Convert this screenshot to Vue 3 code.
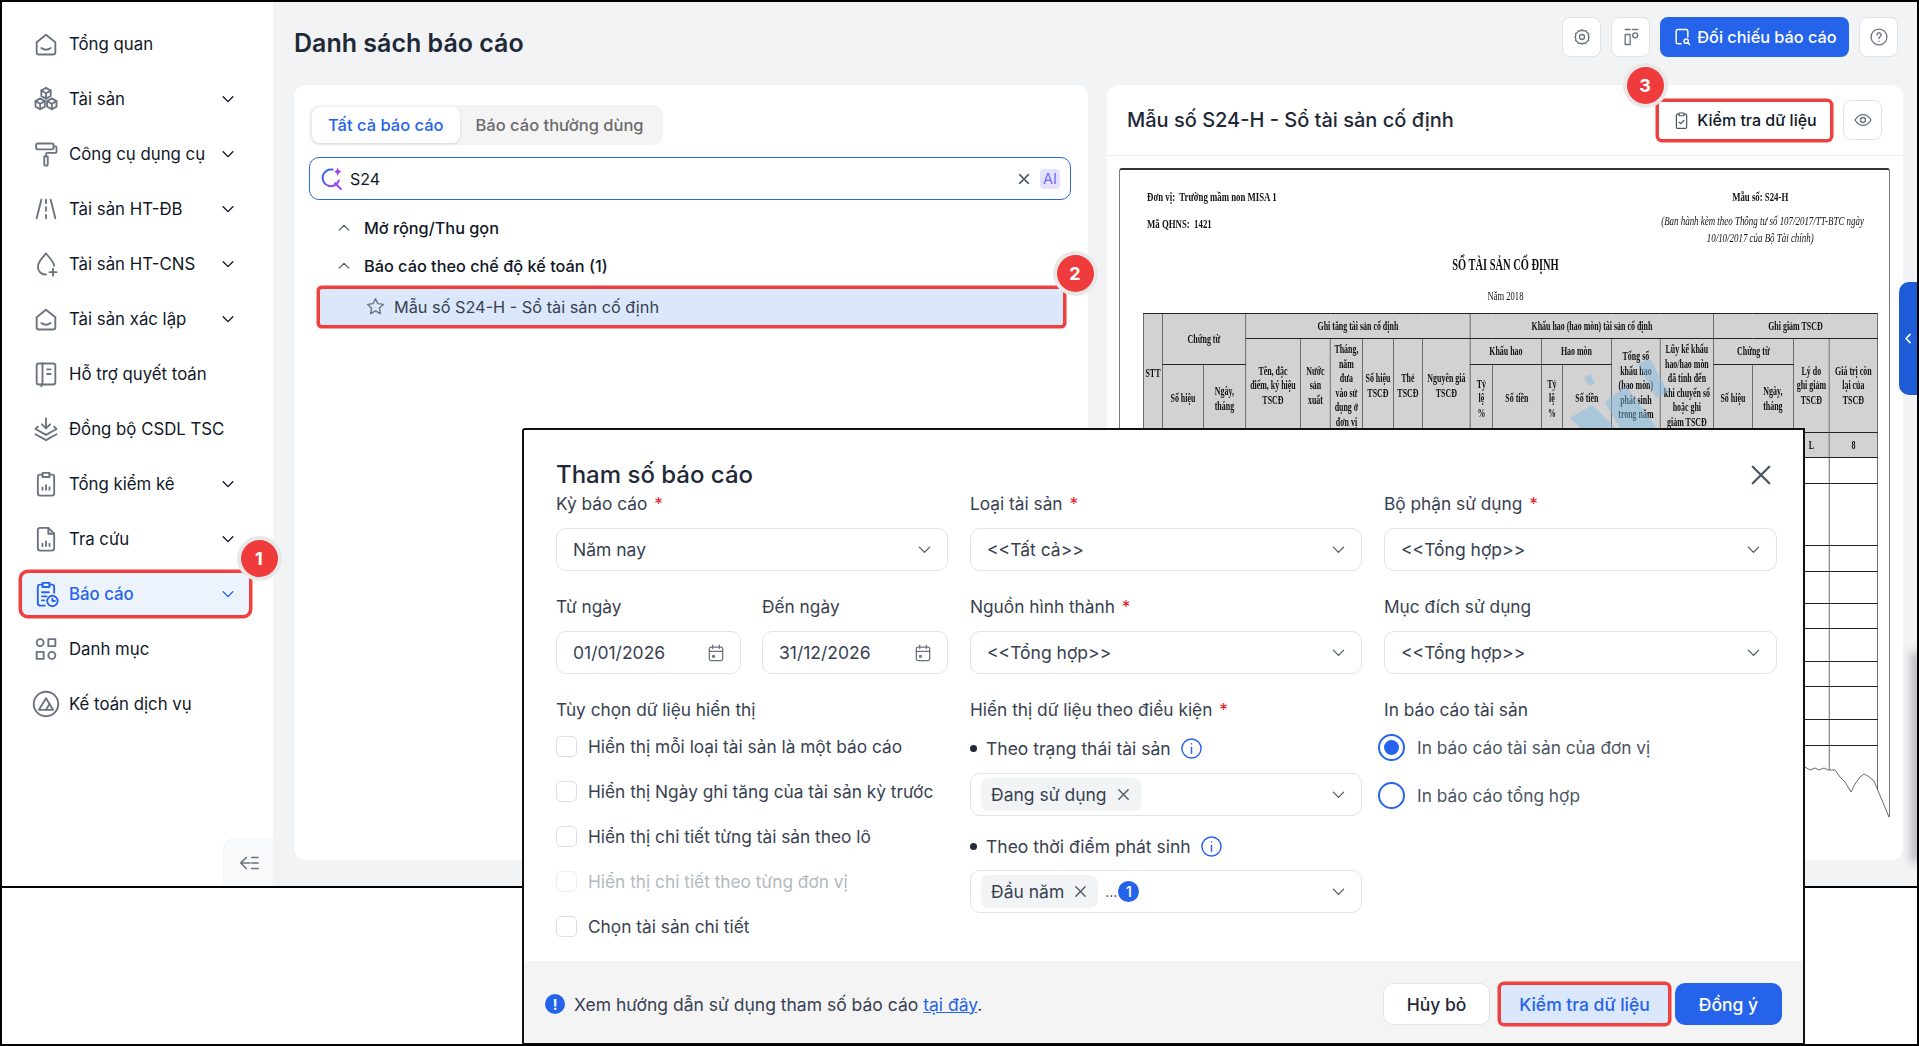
<template>
  <div class="page">
    <div class="app">
      <!-- Sidebar -->
      <aside class="sidebar">
        <div v-for="item in menu" :key="item.label" :class="['menu-item', { active: item.active }]">
          <svg class="menu-icon" viewBox="0 0 24 24">
            <path v-for="d in icons[item.icon]" :key="d" :d="d" />
          </svg>
          <span class="menu-label">{{ item.label }}</span>
          <svg v-if="item.sub" class="menu-chev" viewBox="0 0 16 16"><path d="M2.500 5.500 8 11l5.500-5.500" /></svg>
        </div>
        <div class="collapse-btn">
          <svg viewBox="0 0 24 24"><path d="M9 6 3 12l6 6M3 12h10M15 6h7M15 12h7M15 18h7" /></svg>
        </div>
      </aside>

      <main class="main">
        <header class="topbar">
          <h1>Danh sách báo cáo</h1>
          <div class="top-actions">
            <button class="icon-btn">
              <svg viewBox="0 0 24 24"><path d="M12 3.500l2 1.200 2.500-.3 1.300 2.200 2.200 1.300-.3 2.500L20.500 12l-.8 1.600.3 2.500-2.200 1.300-1.300 2.200-2.500-.3-2 1.200-2-1.200-2.500.3-1.300-2.200L4.300 16.100l.3-2.500L3.500 12l1.100-1.600-.3-2.500 2.200-1.300 1.300-2.200 2.500.3z" /><circle cx="12" cy="12" r="3" /></svg>
            </button>
            <button class="icon-btn">
              <svg viewBox="0 0 24 24"><path d="M5 3h6M5 21V9h6v12zM14 3h6" /><circle cx="17" cy="10" r="3" /></svg>
            </button>
            <button class="primary-btn">
              <svg viewBox="0 0 24 24"><path d="M11 20H7a2 2 0 0 1-2-2V5a2 2 0 0 1 2-2h10a2 2 0 0 1 2 2v7" /><circle cx="17" cy="17" r="2.500" /><path d="m19 19 2 2" /></svg>
              Đối chiếu báo cáo
            </button>
            <button class="icon-btn">
              <svg viewBox="0 0 24 24"><circle cx="12" cy="12" r="9.500" /><path d="M9.500 9.500a2.500 2.500 0 1 1 3.800 2.100c-.9.600-1.300 1.100-1.300 2.200M12 17v.2" /></svg>
            </button>
          </div>
        </header>

        <div class="cards">
          <!-- Danh sách -->
          <section class="card list-card">
            <div class="tabs">
              <div class="tab on">Tất cả báo cáo</div>
              <div class="tab">Báo cáo thường dùng</div>
            </div>
            <div class="search">
              <svg class="search-icon" viewBox="0 0 24 24">
                <defs>
                  <linearGradient id="aig" x1="0" y1="0" x2="1" y2="1"><stop offset="0" stop-color="#2f6bed" /><stop offset="1" stop-color="#b53ff0" /></linearGradient>
                </defs>
                <path d="M13 3.500a8 8 0 1 0 6 10.500M15.500 16.500 21 22" fill="none" stroke="url(#aig)" stroke-width="2" stroke-linecap="round" />
                <path d="M18 1c.5 3 1.500 4 4 4.500-2.500.5-3.500 1.500-4 4.500-.5-3-1.500-4-4-4.500 2.500-.5 3.500-1.500 4-4.500z" fill="#a23ff0" />
              </svg>
              <span class="search-text">S24</span>
              <svg class="search-x" viewBox="0 0 16 16"><path d="m3 3 10 10M13 3 3 13" /></svg>
              <span class="ai-chip">AI</span>
            </div>
            <div class="tree">
              <div class="tree-row">
                <svg viewBox="0 0 16 16"><path d="M2.500 10.500 8 5l5.500 5.500" /></svg>
                Mở rộng/Thu gọn
              </div>
              <div class="tree-row">
                <svg viewBox="0 0 16 16"><path d="M2.500 10.500 8 5l5.500 5.500" /></svg>
                Báo cáo theo chế độ kế toán (1)
              </div>
              <div class="report-row">
                <svg viewBox="0 0 24 24"><path d="m12 3 2.700 5.800 6.300.8-4.600 4.300 1.200 6.300L12 17l-5.600 3.200 1.200-6.300L3 9.600l6.300-.8z" /></svg>
                Mẫu số S24-H - Sổ tài sản cố định
              </div>
            </div>
          </section>

          <!-- Xem trước -->
          <section class="card preview-card">
            <div class="preview-head">
              <h2>Mẫu số S24-H - Sổ tài sản cố định</h2>
              <button class="check-btn">
                <svg viewBox="0 0 24 24"><path d="M9 4H7a1.500 1.500 0 0 0-1.500 1.500v15A1.500 1.500 0 0 0 7 22h10a1.500 1.500 0 0 0 1.500-1.500v-15A1.500 1.500 0 0 0 17 4h-2M9 2.500h6v3.500H9zM9 14l2 2 4-4" /></svg>
                Kiểm tra dữ liệu
              </button>
              <button class="icon-btn">
                <svg viewBox="0 0 24 24"><path d="M2.500 12C5 7.500 8 5.500 12 5.500s7 2 9.500 6.500C19 16.500 16 18.500 12 18.500S5 16.500 2.500 12z" /><circle cx="12" cy="12" r="3" /></svg>
              </button>
            </div>
            <div class="doc-wrap">
              <div class="doc">
                <div class="doc-head">
                  <div class="doc-unit">
                    <p>Đơn vị:&nbsp; Trường mầm non MISA 1</p>
                    <p>Mã QHNS:&nbsp; 1421</p>
                  </div>
                  <div class="doc-form">
                    <p class="form-no">Mẫu số: S24-H</p>
                    <p class="form-note">(Ban hành kèm theo Thông tư số 107/2017/TT-BTC ngày<br />10/10/2017 của Bộ Tài chính)</p>
                  </div>
                </div>
                <p class="doc-title">SỔ TÀI SẢN CỐ ĐỊNH</p>
                <p class="doc-year">Năm 2018</p>
                <table class="doc-table" :style="{ width: tableWidth + 'px' }">
                  <colgroup>
                    <col v-for="(w, i) in colWidths" :key="i" :style="{ width: w + 'px' }" />
                  </colgroup>
                  <tbody>
                    <tr class="h1">
                      <th rowspan="3">STT</th>
                      <th colspan="2" rowspan="2">Chứng từ</th>
                      <th colspan="6">Ghi tăng tài sản cố định</th>
                      <th colspan="6">Khấu hao (hao mòn) tài sản cố định</th>
                      <th colspan="4">Ghi giảm TSCĐ</th>
                    </tr>
                    <tr class="h2">
                      <th rowspan="2">Tên, đặc<br />điểm, ký hiệu<br />TSCĐ</th>
                      <th rowspan="2">Nước<br />sản<br />xuất</th>
                      <th rowspan="2">Tháng,<br />năm<br />đưa<br />vào sử<br />dụng ở<br />đơn vị</th>
                      <th rowspan="2">Số hiệu<br />TSCĐ</th>
                      <th rowspan="2">Thẻ<br />TSCĐ</th>
                      <th rowspan="2">Nguyên giá<br />TSCĐ</th>
                      <th colspan="2">Khấu hao</th>
                      <th colspan="2">Hao mòn</th>
                      <th rowspan="2">Tổng số<br />khấu hao<br />(hao mòn)<br />phát sinh<br />trong năm</th>
                      <th rowspan="2">Lũy kế khấu<br />hao/hao mòn<br />đã tính đến<br />khi chuyển sổ<br />hoặc ghi<br />giảm TSCĐ</th>
                      <th colspan="2">Chứng từ</th>
                      <th rowspan="2">Lý do<br />ghi giảm<br />TSCĐ</th>
                      <th rowspan="2">Giá trị còn<br />lại của<br />TSCĐ</th>
                    </tr>
                    <tr class="h3">
                      <th>Số hiệu</th><th>Ngày,<br />tháng</th>
                      <th>Tỷ<br />lệ<br />%</th><th>Số tiền</th>
                      <th>Tỷ<br />lệ<br />%</th><th>Số tiền</th>
                      <th>Số hiệu</th><th>Ngày,<br />tháng</th>
                    </tr>
                    <tr class="h4">
                      <th v-for="(t, i) in numberRow" :key="i">{{ t }}</th>
                    </tr>
                    <tr v-for="(h, r) in rowHeights" :key="r" :style="{ height: h + 'px' }">
                      <td v-for="c in 19" :key="c"></td>
                    </tr>
                  </tbody>
                </table>
              </div>
              <svg class="watermark" viewBox="1560 360 120 75">
                <path d="M1570 418 1592 405 1620 432H1585zM1605 402 1626 386 1660 432H1622zM1638 364 1650 358 1668 392 1656 398zM1584 378l6-4 5 9-6 3z" />
              </svg>
            </div>
            <!-- Mép giấy bị cắt của ảnh chụp tài liệu -->
            <svg class="torn" viewBox="1800 758 100 110">
              <path class="torn-fill" d="M1800 766 1805 767 1810 770 1815 768 1819 770 1824 768 1828 770 1835 770 1840 777 1845 782 1851 792 1855 784 1860 777 1864 774 1868 776 1874 781 1889 817H1900V868H1800z" />
              <path class="torn-line" d="M1805 767 1810 770 1815 768 1819 770 1824 768 1828 770 1835 770 1840 777 1845 782 1851 792 1855 784 1860 777 1864 774 1868 776 1874 781 1889 817" />
            </svg>
          </section>
        </div>
        <div class="side-tab">
          <svg viewBox="0 0 16 16"><path d="M10 3 5 8l5 5" /></svg>
        </div>
        <div class="edge-shade"></div>
      </main>
    </div>

    <!-- Hộp thoại tham số -->
    <div class="modal">
      <div class="modal-body">
        <h3 class="modal-title">Tham số báo cáo</h3>
        <svg class="modal-close" viewBox="0 0 24 24"><path d="M3 3l18 18M21 3 3 21" /></svg>
        <div class="form-grid">
          <div class="col">
            <label class="lbl">Kỳ báo cáo <i>*</i></label>
            <div class="select">Năm nay<svg viewBox="0 0 16 16"><path d="M2.500 5.500 8 11l5.500-5.500" /></svg></div>
            <div class="date-pair">
              <div class="date-item">
                <label class="lbl">Từ ngày</label>
                <div class="select">01/01/2026<svg class="cal" viewBox="0 0 24 24"><rect x="4" y="5" width="16" height="16" rx="2" /><path d="M4 10h16M8 2.500v4M16 2.500v4M8 15h2v2H8z" /></svg></div>
              </div>
              <div class="date-item">
                <label class="lbl">Đến ngày</label>
                <div class="select">31/12/2026<svg class="cal" viewBox="0 0 24 24"><rect x="4" y="5" width="16" height="16" rx="2" /><path d="M4 10h16M8 2.500v4M16 2.500v4M8 15h2v2H8z" /></svg></div>
              </div>
            </div>
            <label class="lbl spaced">Tùy chọn dữ liệu hiển thị</label>
            <div class="checks">
              <div v-for="c in checks" :key="c.text" :class="['check', { off: c.off }]">
                <span class="box"></span>{{ c.text }}
              </div>
            </div>
          </div>

          <div class="col">
            <label class="lbl">Loại tài sản <i>*</i></label>
            <div class="select">&lt;&lt;Tất cả&gt;&gt;<svg viewBox="0 0 16 16"><path d="M2.500 5.500 8 11l5.500-5.500" /></svg></div>
            <label class="lbl spaced">Nguồn hình thành <i>*</i></label>
            <div class="select">&lt;&lt;Tổng hợp&gt;&gt;<svg viewBox="0 0 16 16"><path d="M2.500 5.500 8 11l5.500-5.500" /></svg></div>
            <label class="lbl spaced">Hiển thị dữ liệu theo điều kiện <i>*</i></label>
            <div class="cond first"><span class="bullet"></span>Theo trạng thái tài sản
              <svg class="info" viewBox="0 0 24 24"><circle cx="12" cy="12" r="10" /><path d="M12 11v6M12 7v.2" /></svg>
            </div>
            <div class="select tags near">
              <span class="tag">Đang sử dụng<svg viewBox="0 0 16 16"><path d="m3 3 10 10M13 3 3 13" /></svg></span>
              <svg class="chev" viewBox="0 0 16 16"><path d="M2.500 5.500 8 11l5.500-5.500" /></svg>
            </div>
            <div class="cond"><span class="bullet"></span>Theo thời điểm phát sinh
              <svg class="info" viewBox="0 0 24 24"><circle cx="12" cy="12" r="10" /><path d="M12 11v6M12 7v.2" /></svg>
            </div>
            <div class="select tags">
              <span class="tag">Đầu năm<svg viewBox="0 0 16 16"><path d="m3 3 10 10M13 3 3 13" /></svg></span>
              <span class="more">...</span><span class="count">1</span>
              <svg class="chev" viewBox="0 0 16 16"><path d="M2.500 5.500 8 11l5.500-5.500" /></svg>
            </div>
          </div>

          <div class="col">
            <label class="lbl">Bộ phận sử dụng <i>*</i></label>
            <div class="select">&lt;&lt;Tổng hợp&gt;&gt;<svg viewBox="0 0 16 16"><path d="M2.500 5.500 8 11l5.500-5.500" /></svg></div>
            <label class="lbl spaced">Mục đích sử dụng</label>
            <div class="select">&lt;&lt;Tổng hợp&gt;&gt;<svg viewBox="0 0 16 16"><path d="M2.500 5.500 8 11l5.500-5.500" /></svg></div>
            <label class="lbl spaced">In báo cáo tài sản</label>
            <div class="radios">
              <div class="radio on"><span class="dot"></span>In báo cáo tài sản của đơn vị</div>
              <div class="radio"><span class="dot"></span>In báo cáo tổng hợp</div>
            </div>
          </div>
        </div>
      </div>
      <footer class="modal-foot">
        <span class="hint-icon">!</span>
        <span class="hint">Xem hướng dẫn sử dụng tham số báo cáo <a>tại đây</a>.</span>
        <button class="btn ghost">Hủy bỏ</button>
        <button class="btn soft">Kiểm tra dữ liệu</button>
        <button class="btn solid">Đồng ý</button>
      </footer>
    </div>

    <!-- Đánh số hướng dẫn -->
    <span v-for="b in badges" :key="b.n" class="badge" :style="{ left: b.x + 'px', top: b.y + 'px' }">{{ b.n }}</span>
  </div>
</template>

<script setup>
const icons = {
  home: ['M4 10.500 12 4l8 6.500V19a2 2 0 0 1-2 2H6a2 2 0 0 1-2-2z', 'M8 15.500c2.500 1.800 5.500 1.800 8 0'],
  cubes: ['M12 2.500 16 4.800v4.600L12 11.700 8 9.400V4.800z', 'M8 4.800 12 7.100 16 4.800M12 7.100v4.600', 'M7 11.500 11 13.800v4.700L7 20.800 3 18.500v-4.700z', 'M3 13.800 7 16.100 11 13.800M7 16.100v4.700', 'M17 11.500 21 13.800v4.700L17 20.800 13 18.500v-4.700z', 'M13 13.800 17 16.100 21 13.800M17 16.100v4.700'],
  roller: ['M5 3h12a1.500 1.500 0 0 1 1.500 1.500v2A1.500 1.500 0 0 1 17 8H5a1.500 1.500 0 0 1-1.500-1.500v-2A1.500 1.500 0 0 1 5 3z', 'M18.500 5.500H20a1 1 0 0 1 1 1V10a1 1 0 0 1-1 1h-7a1 1 0 0 0-1 1v2', 'M10.500 14h3v6.500a1.500 1.500 0 0 1-3 0z'],
  road: ['M8 4 4 20', 'M16 4l4 16', 'M12 4v3M12 10.500v3M12 17v3'],
  drop: ['M12 3c3 3.500 6.500 7 7 10.500', 'M12 3C9 6.500 5 10 5 14.500A6.500 6.500 0 0 0 12 21', 'M18 16v6M15 19h6'],
  book: ['M6 3h12a2 2 0 0 1 2 2v14a2 2 0 0 1-2 2H6a2 2 0 0 1-2-2V5a2 2 0 0 1 2-2z', 'M9 3v18M13 8h3M13 12h3M8 21v1.500'],
  layers: ['M12 3v8M8.500 8l3.500 3.500L15.500 8', 'M5 10 3 12l9 5 9-5-2-2', 'M3 16.500 12 21.500l9-5'],
  clipChart: ['M9 4H7a2 2 0 0 0-2 2v14a2 2 0 0 0 2 2h10a2 2 0 0 0 2-2V6a2 2 0 0 0-2-2h-2', 'M9 2.500h6v3.500H9z', 'M9 17v-2M12 17v-4M15 17v-2'],
  docChart: ['M7 2.500h7l5 5V20a2 2 0 0 1-2 2H7a2 2 0 0 1-2-2V4.500a2 2 0 0 1 2-2z', 'M14 2.500v5h5', 'M9 18v-2M12 18v-4M15 18v-2'],
  clipClock: ['M9 4H7a2 2 0 0 0-2 2v14a2 2 0 0 0 2 2h4', 'M15 4h2a2 2 0 0 1 2 2v5', 'M9 2.500h6v3.500H9z', 'M8.500 10.500h6M8.500 14h4M8.500 17.500h2', 'M17.500 13.500a4.500 4.500 0 1 0 0 9 4.500 4.500 0 0 0 0-9z', 'M17.500 16v2h2'],
  grid: ['M10 6.500a3 3 0 1 1-6 0 3 3 0 0 1 6 0z', 'M14 3.500h6v6h-6z', 'M4 14.500h6v6H4z', 'M20 17.500a3 3 0 1 1-6 0 3 3 0 0 1 6 0z'],
  logo: ['M12 1.500a10.500 10.500 0 1 0 0 21 10.500 10.500 0 0 0 0-21z', 'M6 17 12 7l3 5-3 5H6z', 'M12 17h6l-3-5'],
}

const menu = [
  { label: 'Tổng quan', icon: 'home' },
  { label: 'Tài sản', icon: 'cubes', sub: true },
  { label: 'Công cụ dụng cụ', icon: 'roller', sub: true },
  { label: 'Tài sản HT-ĐB', icon: 'road', sub: true },
  { label: 'Tài sản HT-CNS', icon: 'drop', sub: true },
  { label: 'Tài sản xác lập', icon: 'home', sub: true },
  { label: 'Hỗ trợ quyết toán', icon: 'book' },
  { label: 'Đồng bộ CSDL TSC', icon: 'layers' },
  { label: 'Tổng kiểm kê', icon: 'clipChart', sub: true },
  { label: 'Tra cứu', icon: 'docChart', sub: true },
  { label: 'Báo cáo', icon: 'clipClock', sub: true, active: true },
  { label: 'Danh mục', icon: 'grid' },
  { label: 'Kế toán dịch vụ', icon: 'logo' },
]

const checks = [
  { text: 'Hiển thị mỗi loại tài sản là một báo cáo' },
  { text: 'Hiển thị Ngày ghi tăng của tài sản kỳ trước' },
  { text: 'Hiển thị chi tiết từng tài sản theo lô' },
  { text: 'Hiển thị chi tiết theo từng đơn vị', off: true },
  { text: 'Chọn tài sản chi tiết' },
]

const badges = [
  { n: 1, x: 259, y: 558 },
  { n: 2, x: 1075, y: 273 },
  { n: 3, x: 1645, y: 85 },
]

// Vị trí các đường kẻ dọc của bảng trên màn hình, chia lại theo tỉ lệ nén ngang của tài liệu
const DOC_SCALE = 0.66
const colEdges = [1143, 1162, 1203, 1245, 1300, 1330, 1362, 1393, 1422, 1470, 1492, 1541, 1562, 1611, 1660, 1713, 1752, 1793, 1829, 1877]
const colWidths = colEdges.slice(1).map((x, i) => (x - colEdges[i]) / DOC_SCALE)
const tableWidth = (colEdges[colEdges.length - 1] - colEdges[0]) / DOC_SCALE
const numberRow = Array.from({ length: 19 }, (_, i) => (i === 17 ? 'L' : i === 18 ? '8' : ''))
const rowHeights = [26, 62, 26, 32, 25, 33, 25, 33, 26, 60]
</script>

<style scoped>
.page {
  position: relative;
  width: 1919px;
  height: 1046px;
  box-sizing: border-box;
  border: 2px solid #000;
  overflow: hidden;
  background: #fff;
  font-family: Inter, "Noto Sans", sans-serif;
  color: #111827;
}

.app {
  display: flex;
  height: 884px;
  border-bottom: 2px solid #000;
  box-sizing: content-box;
}

svg {
  fill: none;
  stroke: currentColor;
  stroke-linecap: round;
  stroke-linejoin: round;
  flex-shrink: 0;
}

/* Sidebar */
.sidebar {
  position: relative;
  width: 271px;
  padding: 18px 20px 0;
  box-sizing: border-box;
  display: flex;
  flex-direction: column;
  gap: 8px;
  background: #fff;
}

.menu-item {
  display: flex;
  align-items: center;
  height: 47px;
  padding: 0 18px 0 10px;
  border-radius: 6px;
  font-size: 16.800px;
  color: #111827;
}

.menu-icon {
  width: 28px;
  height: 28px;
  margin-right: 9px;
  stroke-width: 1.600;
  color: #6b7280;
}

.menu-label {
  flex: 1;
}

.menu-chev {
  width: 14px;
  height: 14px;
  stroke-width: 1.600;
  color: #111827;
}

.menu-item.active {
  height: 42px;
  margin: 2.500px 4.500px 2.500px 0;
  padding-right: 13.500px;
  background: #edf3fd;
  color: #2563eb;
  font-weight: 500;
  box-shadow: 0 0 0 3.500px #ef4040;
}

.menu-item.active .menu-icon,
.menu-item.active .menu-chev {
  color: #2563eb;
}

.collapse-btn {
  position: absolute;
  right: 0;
  bottom: 0;
  width: 49px;
  height: 47px;
  display: flex;
  align-items: center;
  justify-content: center;
  background: #f8f9fa;
  border-top-left-radius: 10px;
  box-shadow: 0 0 2px rgba(0, 0, 0, 0.12);
  color: #6b7280;
}

.collapse-btn svg {
  width: 22px;
  height: 22px;
  stroke-width: 1.800;
}

/* Main */
.main {
  position: relative;
  flex: 1;
  min-width: 0;
  display: flex;
  flex-direction: column;
  overflow: hidden;
  background: #f1f3f5;
}

.topbar {
  display: flex;
  align-items: center;
  justify-content: space-between;
  height: 83px;
  padding: 0 19px 0 21px;
  box-sizing: border-box;
}

.topbar h1 {
  margin: 0 0 2px;
  font-size: 25px;
  font-weight: 600;
  color: #1f2937;
}

.top-actions {
  display: flex;
  align-items: center;
  gap: 10px;
  margin-top: -14px;
}

.icon-btn {
  width: 39px;
  height: 40px;
  padding: 0;
  display: flex;
  align-items: center;
  justify-content: center;
  background: #fff;
  border: 1px solid #dfe2e6;
  border-radius: 8px;
  color: #6b7280;
}

.icon-btn svg {
  width: 20px;
  height: 20px;
  stroke-width: 1.600;
}

.primary-btn {
  width: 189px;
  height: 40px;
  display: flex;
  align-items: center;
  justify-content: center;
  gap: 5px;
  padding: 0;
  background: #2563eb;
  border: 0;
  border-radius: 8px;
  color: #fff;
  font: 500 16.300px Inter, sans-serif;
}

.primary-btn svg {
  width: 20px;
  height: 20px;
  stroke-width: 1.800;
}

.cards {
  flex: 1;
  display: flex;
  gap: 19px;
  padding: 0 14px 26px 21px;
  min-height: 0;
}

.card {
  flex: 1;
  min-width: 0;
  background: #fff;
  border-radius: 12px;
  box-sizing: border-box;
}

.list-card {
  padding: 20px 15px 0;
  flex: 0 0 794px;
}

.tabs {
  display: inline-flex;
  padding: 2px 3px;
  background: #f4f4f5;
  border-radius: 10px;
  height: 40px;
  box-sizing: border-box;
  font-size: 16.500px;
}

.tab {
  display: flex;
  align-items: center;
  padding: 0 16px;
  color: #6b6b6b;
  border-radius: 8px;
  font-weight: 500;
}

.tab.on {
  background: #fff;
  color: #2563eb;
  box-shadow: 0 1px 3px rgba(0, 0, 0, 0.12);
}

.search {
  display: flex;
  align-items: center;
  height: 43px;
  margin: 12px 2px 0 0;
  padding: 0 10px 0 9px;
  border: 1.500px solid #2f66d8;
  border-radius: 10px;
  box-sizing: border-box;
}

.search-icon {
  width: 25px;
  height: 25px;
  margin-right: 6px;
  stroke: none;
}

.search-text {
  flex: 1;
  font-size: 16px;
}

.search-x {
  width: 14px;
  height: 14px;
  stroke-width: 1.700;
  color: #4b5563;
  margin-right: 9px;
}

.ai-chip {
  width: 20px;
  height: 20px;
  display: flex;
  align-items: center;
  justify-content: center;
  background: linear-gradient(135deg, #dde6fd, #eedcfd);
  border-radius: 4px;
  font-size: 14.500px;
  color: #6d6cf0;
}

.tree {
  margin-top: 9px;
}

.tree-row {
  display: flex;
  align-items: center;
  height: 38px;
  padding-left: 28px;
  font-size: 16.300px;
  font-weight: 500;
  color: #111827;
}

.tree-row svg {
  width: 14px;
  height: 14px;
  margin-right: 13px;
  stroke-width: 1.400;
  color: #4b5563;
}

.report-row {
  display: flex;
  align-items: center;
  height: 36px;
  margin: 3.500px 10px 0 11px;
  padding-left: 45px;
  background: #dbe7fa;
  font-size: 16.300px;
  color: #374151;
  box-shadow: 0 0 0 3.500px #ef4040;
  border-radius: 2px;
}

.report-row svg {
  width: 21px;
  height: 21px;
  margin-right: 8px;
  stroke-width: 1.500;
  color: #6b7280;
}

.preview-card {
  position: relative;
  display: flex;
  flex-direction: column;
  overflow: hidden;
}

.preview-head {
  display: flex;
  align-items: center;
  height: 71px;
  padding: 0 21px 0 20px;
  border-bottom: 1px solid #eceef1;
  box-sizing: border-box;
  flex-shrink: 0;
}

.preview-head h2 {
  flex: 1;
  margin: 0;
  font-size: 20px;
  font-weight: 500;
  color: #1f2937;
}

.check-btn {
  display: flex;
  align-items: center;
  justify-content: center;
  gap: 6px;
  width: 171px;
  height: 37px;
  margin-right: 13px;
  padding: 0;
  background: #fff;
  border: 0;
  border-radius: 3px;
  box-shadow: 0 0 0 3.500px #ef4040;
  font: 500 16px Inter, sans-serif;
  color: #111827;
}

.check-btn svg {
  width: 19px;
  height: 19px;
  stroke-width: 1.500;
  color: #4b5563;
}

/* Tài liệu xem trước */
.doc-wrap {
  position: relative;
  flex: 1;
  margin: 12px 13px 0 12px;
  overflow: hidden;
  border: 1px solid #777;
  border-top: 2px solid #333;
  border-bottom: 0;
  border-radius: 3px 3px 0 0;
}

.doc {
  width: 1168px;
  transform: scaleX(0.66);
  transform-origin: 0 0;
  font-family: "Liberation Serif", serif;
  color: #111;
}

.doc p {
  margin: 0;
}

.doc-head {
  display: flex;
  justify-content: space-between;
  padding: 14px 48px 0 41px;
  height: 84px;
  box-sizing: border-box;
  font-weight: 700;
  font-size: 13.300px;
}

.doc-unit p {
  line-height: 26px;
  height: 27px;
}

.doc-form {
  text-align: center;
  width: 300px;
  white-space: nowrap;
}

.form-no {
  line-height: 26px;
}

.form-note {
  display: block;
  margin-top: 2px !important;
  font-weight: 400;
  font-style: italic;
  line-height: 17px;
  font-size: 13.500px;
}

.doc-title {
  text-align: center;
  font-size: 15.800px;
  font-weight: 700;
  line-height: 22px;
}

.doc-year {
  text-align: center;
  font-size: 13px;
  line-height: 16px;
  margin-top: 12px !important;
  margin-bottom: 8px !important;
  height: 17px;
}

.doc-table {
  margin-left: 35px;
  border-collapse: collapse;
  table-layout: fixed;
  font-size: 12px;
}

.doc-table th,
.doc-table td {
  border: 1px solid #222;
  padding: 0;
  overflow: hidden;
  white-space: nowrap;
}

.doc-table th {
  background: #d2d2d2;
  font-weight: 700;
  line-height: 14.500px;
  text-align: center;
}

.h1 { height: 25px; }
.h2 { height: 26px; }
.h3 { height: 68px; }
.h4 { height: 25px; }

.watermark {
  position: absolute;
  left: 440px;
  top: 190px;
  width: 120px;
  height: 75px;
  stroke: none;
  fill: rgba(130, 185, 225, 0.5);
}

.torn {
  position: absolute;
  left: 693px;
  top: 673px;
  width: 100px;
  height: 110px;
}

.torn-fill {
  fill: #fff;
  stroke: none;
}

.torn-line {
  stroke: #444;
  stroke-width: 0.800;
}

.side-tab {
  position: absolute;
  top: 280px;
  right: 0;
  width: 18px;
  height: 113px;
  display: flex;
  align-items: center;
  justify-content: center;
  background: #1f5cd7;
  border-radius: 10px 0 0 10px;
  color: #fff;
}

.side-tab svg {
  width: 13px;
  height: 13px;
  stroke-width: 2;
}

.edge-shade {
  position: absolute;
  top: 650px;
  right: -4px;
  width: 10px;
  height: 210px;
  background: #b5b7ba;
  filter: blur(4px);
}

/* Modal */
.modal {
  position: absolute;
  left: 520px;
  top: 426px;
  width: 1283px;
  height: 617px;
  display: flex;
  flex-direction: column;
  box-sizing: border-box;
  background: #fff;
  border: 2px solid #111;
  border-radius: 3px 0 0 3px;
}

.modal-body {
  position: relative;
  flex: 1;
  padding: 28px 26px 0 32px;
}

.modal-title {
  margin: 0;
  height: 34px;
  line-height: 34px;
  font-size: 24px;
  font-weight: 500;
  color: #1f2937;
}

.modal-close {
  position: absolute;
  top: 34px;
  right: 31px;
  width: 22px;
  height: 22px;
  stroke-width: 2.500;
  color: #4b5563;
}

.form-grid {
  display: grid;
  grid-template-columns: 392px 392px 393px;
  column-gap: 22px;
}

.lbl {
  display: block;
  height: 24px;
  line-height: 24px;
  font-size: 17.300px;
  color: #374151;
}

.lbl i {
  font-style: normal;
  color: #e11d2e;
  margin-left: 2px;
}

.lbl.spaced {
  margin-top: 24px;
}

.select {
  position: relative;
  display: flex;
  align-items: center;
  justify-content: space-between;
  height: 43px;
  margin-top: 12px;
  padding: 0 15px 0 16px;
  border: 1px solid #e1e3e7;
  border-radius: 10px;
  box-sizing: border-box;
  font-size: 17.500px;
  color: #374151;
}

.select > svg {
  width: 15px;
  height: 15px;
  stroke-width: 1.300;
  color: #4b5563;
}

.select > svg.cal {
  width: 20px;
  height: 20px;
  stroke-width: 1.500;
  color: #6b7280;
  margin-right: -1px;
}

.date-pair {
  display: grid;
  grid-template-columns: 185px 186px;
  column-gap: 21px;
  margin-top: 24px;
}

.checks {
  display: flex;
  flex-direction: column;
  gap: 24px;
  margin-top: 14px;
}

.check {
  display: flex;
  align-items: center;
  height: 21px;
  font-size: 17.300px;
  color: #374151;
}

.check.off {
  color: #b3b8bf;
}

.box {
  width: 21px;
  height: 21px;
  margin-right: 11px;
  border: 1px solid #dcdfe3;
  border-radius: 5px;
  box-sizing: border-box;
}

.check.off .box {
  border-color: #eceef0;
}

.cond {
  display: flex;
  align-items: center;
  height: 24px;
  margin-top: 18px;
  font-size: 17.500px;
  color: #374151;
}

.cond.first {
  margin-top: 14px;
}

.bullet {
  width: 7px;
  height: 7px;
  margin-right: 9px;
  border-radius: 50%;
  background: #1f2937;
}

.info {
  width: 23px;
  height: 23px;
  margin-left: 9px;
  stroke-width: 1.500;
  color: #2563eb;
}

.select.tags {
  justify-content: flex-start;
  padding-left: 10px;
}

.select.near {
  margin-top: 13px;
}

.select.tags .chev {
  margin-left: auto;
}

.tag {
  display: inline-flex;
  align-items: center;
  gap: 9px;
  height: 33px;
  padding: 0 10px;
  background: #f1f3f5;
  border-radius: 8px;
  font-size: 17.500px;
}

.tag svg {
  width: 15px;
  height: 15px;
  stroke-width: 1.400;
  color: #4b5563;
}

.more {
  margin-left: 7px;
  font-size: 14px;
}

.count {
  width: 21px;
  height: 21px;
  margin-left: 1px;
  display: flex;
  align-items: center;
  justify-content: center;
  border-radius: 50%;
  background: #2563eb;
  color: #fff;
  font-size: 15px;
  font-weight: 500;
}

.radios {
  display: flex;
  flex-direction: column;
  gap: 22px;
  margin-top: 12px;
  margin-left: -6px;
}

.radio {
  display: flex;
  align-items: center;
  height: 26px;
  font-size: 17.300px;
  color: #4b5563;
}

.dot {
  position: relative;
  width: 27px;
  height: 27px;
  margin-right: 12px;
  border: 2px solid #2563eb;
  border-radius: 50%;
  box-sizing: border-box;
}

.radio.on .dot::after {
  content: '';
  position: absolute;
  inset: 4px;
  border-radius: 50%;
  background: #2563eb;
}

.modal-foot {
  display: flex;
  align-items: center;
  height: 82px;
  padding: 4px 21px 0;
  box-sizing: border-box;
  background: #f4f4f5;
  flex-shrink: 0;
}

.hint-icon {
  width: 20px;
  height: 20px;
  margin-right: 9px;
  display: flex;
  align-items: center;
  justify-content: center;
  border-radius: 50%;
  background: #2563eb;
  color: #fff;
  font-size: 14px;
  font-weight: 700;
}

.hint {
  flex: 1;
  font-size: 17.500px;
  color: #374151;
}

.hint a {
  color: #2563eb;
  text-decoration: underline;
}

.btn {
  height: 42px;
  padding: 0;
  border-radius: 10px;
  font: 500 17.500px Inter, sans-serif;
}

.btn.ghost {
  width: 107px;
  background: #fff;
  border: 1px solid #e1e3e7;
  color: #1f2937;
}

.btn.soft {
  width: 167px;
  height: 38px;
  margin: 0 7px 0 11px;
  background: #dbe7fa;
  border: 0;
  border-radius: 3px;
  box-shadow: 0 0 0 3.500px #ef4040;
  color: #2563eb;
}

.btn.solid {
  width: 107px;
  background: #2563eb;
  border: 0;
  color: #fff;
}

.badge {
  position: absolute;
  width: 37px;
  height: 37px;
  margin: -20.500px 0 0 -20.500px;
  display: flex;
  align-items: center;
  justify-content: center;
  border-radius: 50%;
  background: #ef3b3b;
  box-shadow: 0 0 0 4px #e8e8e8;
  color: #fff;
  font-size: 18px;
  font-weight: 700;
}
</style>

<style>
html,
body {
  margin: 0;
  background: #fff;
}
</style>
